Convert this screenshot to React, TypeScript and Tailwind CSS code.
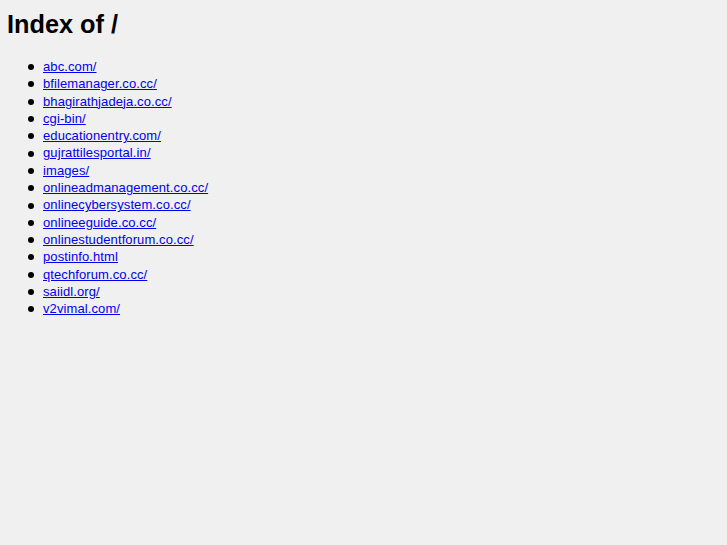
export default function App() {
  const entries = [
    "abc.com/",
    "bfilemanager.co.cc/",
    "bhagirathjadeja.co.cc/",
    "cgi-bin/",
    "educationentry.com/",
    "gujrattilesportal.in/",
    "images/",
    "onlineadmanagement.co.cc/",
    "onlinecybersystem.co.cc/",
    "onlineeguide.co.cc/",
    "onlinestudentforum.co.cc/",
    "postinfo.html",
    "qtechforum.co.cc/",
    "saiidl.org/",
    "v2vimal.com/",
  ];

  return (
    <div className="min-h-[545px] bg-[#f0f0f0] pl-[7px] pt-[9px] font-['Liberation_Sans',Arial,sans-serif] text-black">
      <h1 className="text-[25.3px] leading-[30px] font-bold">Index of /</h1>
      <ul className="mt-[19px] pl-[21px] text-[13px] leading-[17.3px]">
        {entries.map((name) => (
          <li key={name} className="flex items-center">
            <span className="mr-[9px] mt-[1px] h-[6px] w-[6px] rounded-full bg-black" />
            <a href={name} className="tracking-[0.1px] text-[#0000ee] underline">
              {name}
            </a>
          </li>
        ))}
      </ul>
    </div>
  );
}
